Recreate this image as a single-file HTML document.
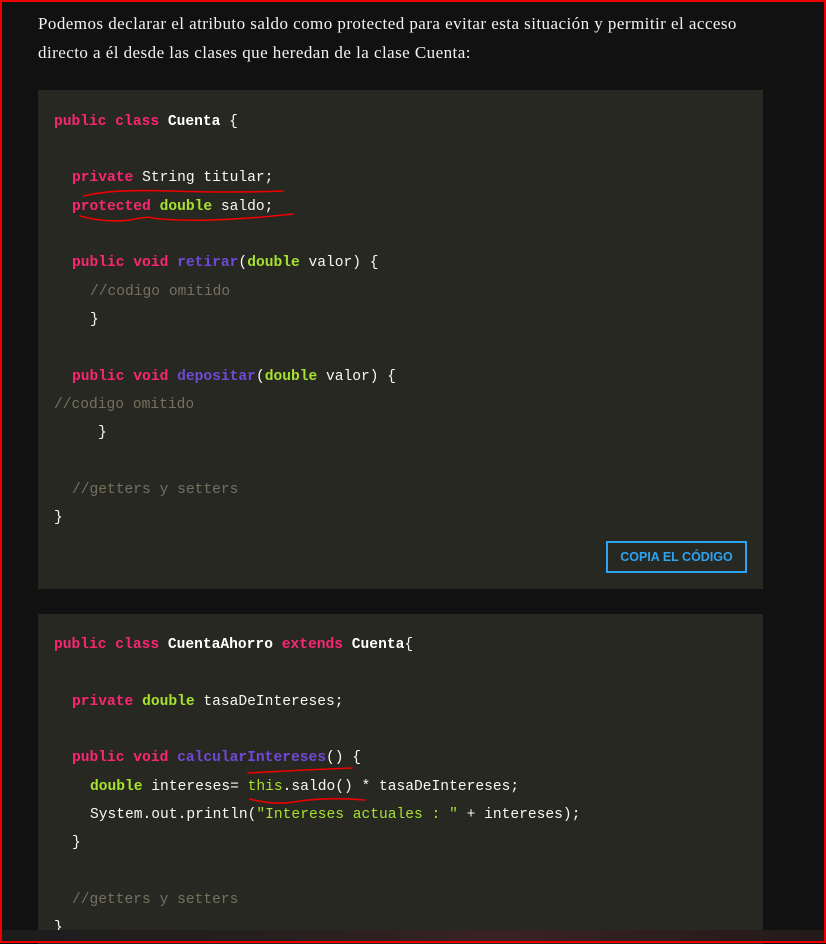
<!DOCTYPE html>
<html><head><meta charset="utf-8"><style>
html,body{margin:0;padding:0}
body{width:826px;height:943px;background:#111;position:relative;overflow:hidden;}
.frame{position:absolute;left:0;top:0;width:822px;height:939px;border:2px solid #e00;z-index:5;pointer-events:none}
p.t{position:absolute;left:38px;top:9px;margin:0;width:720px;font-family:"Liberation Serif",serif;font-size:17px;letter-spacing:0.45px;line-height:29px;color:#f2f2f2}
.blk{position:absolute;left:38px;width:725px;background:#272822}
.l{position:absolute;font-family:"Liberation Mono",monospace;font-size:14.6px;color:#f8f8f2;white-space:pre;line-height:18px}
.k{color:#f92672;font-weight:bold}.g{color:#a6e22e;font-weight:bold}.f{color:#7049d6;font-weight:bold}.w{font-weight:bold;color:#fff}.c{color:#75715e}.s{color:#a6e22e}
.btn{position:absolute;left:568px;top:451px;width:137px;height:28px;border:2px solid #2ea3f2;color:#2ea3f2;font-family:"Liberation Sans",sans-serif;font-weight:bold;font-size:12.5px;line-height:28px;text-align:center}
.bot{position:absolute;left:0;top:930px;width:826px;height:13px;background:linear-gradient(90deg,#1c1c1c,#2a2020 40%,#3a2222 60%,#231a1a)}
svg{position:absolute;left:0;top:0}
</style></head><body>
<p class="t">Podemos declarar el atributo saldo como protected para evitar esta situación y permitir el acceso directo a él desde las clases que heredan de la clase Cuenta:</p>
<div class="blk" style="top:90px;height:499px">
<div class="l" style="left:16px;top:23px"><span class="k">public class</span> <span class="w">Cuenta</span> {</div>
<div class="l" style="left:34px;top:79px"><span class="k">private</span> String titular;</div>
<div class="l" style="left:34px;top:108px"><span class="k">protected</span> <span class="g">double</span> saldo;</div>
<div class="l" style="left:34px;top:164px"><span class="k">public void</span> <span class="f">retirar</span>(<span class="g">double</span> valor) {</div>
<div class="l" style="left:52px;top:193px"><span class="c">//codigo omitido</span></div>
<div class="l" style="left:52px;top:221px">}</div>
<div class="l" style="left:34px;top:278px"><span class="k">public void</span> <span class="f">depositar</span>(<span class="g">double</span> valor) {</div>
<div class="l" style="left:16px;top:306px"><span class="c">//codigo omitido</span></div>
<div class="l" style="left:60px;top:334px">}</div>
<div class="l" style="left:34px;top:391px"><span class="c">//getters y setters</span></div>
<div class="l" style="left:16px;top:419px">}</div>
<div class="btn">COPIA EL CÓDIGO</div>
</div>
<div class="blk" style="top:614px;height:330px">
<div class="l" style="left:16px;top:22px"><span class="k">public class</span> <span class="w">CuentaAhorro</span> <span class="k">extends</span> <span class="w">Cuenta</span>{</div>
<div class="l" style="left:34px;top:79px"><span class="k">private</span> <span class="g">double</span> tasaDeIntereses;</div>
<div class="l" style="left:34px;top:135px"><span class="k">public void</span> <span class="f">calcularIntereses</span>() {</div>
<div class="l" style="left:52px;top:164px"><span class="g">double</span> intereses= <span class="s">this</span>.saldo() * tasaDeIntereses;</div>
<div class="l" style="left:52px;top:192px">System.out.println(<span class="s">"Intereses actuales : "</span> + intereses);</div>
<div class="l" style="left:34px;top:220px">}</div>
<div class="l" style="left:34px;top:277px"><span class="c">//getters y setters</span></div>
<div class="l" style="left:16px;top:305px">}</div>
</div>
<svg width="826" height="943"><g fill="none" stroke="#e00" stroke-width="1.6" stroke-linecap="round">
<path d="M84 196 Q110 189 170 191 Q230 193 283 191"/>
<path d="M80 216 Q110 224 135 219 Q150 216 152 218 Q200 224 293 214"/>
<path d="M248 773 Q300 770 352 768"/>
<path d="M250 799 Q275 806 300 801 Q330 797 365 800"/>
</g></svg>
<div class="bot"></div>
<div class="frame"></div>
</body></html>
